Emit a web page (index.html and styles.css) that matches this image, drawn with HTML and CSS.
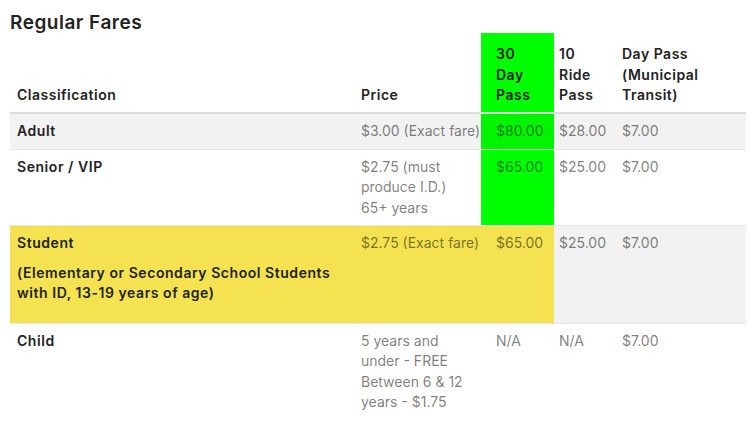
FILE: index.html
```html
<!DOCTYPE html>
<html lang="en">
<head>
<meta charset="utf-8">
<title>Regular Fares</title>
<link rel="stylesheet" href="styles.css">
</head>
<body>
<main class="page">
  <h2 class="title">Regular Fares</h2>
  <table class="fares">
    <colgroup>
      <col class="c-class">
      <col class="c-price">
      <col class="c-30">
      <col class="c-10">
      <col class="c-day">
    </colgroup>
    <thead>
      <tr>
        <th class="col1">Classification</th>
        <th class="col2">Price</th>
        <th class="col3 green">30<br>Day<br>Pass</th>
        <th class="col4">10<br>Ride<br>Pass</th>
        <th class="col5">Day Pass<br>(Municipal<br>Transit)</th>
      </tr>
    </thead>
    <tbody>
      <tr class="striped">
        <td class="col1 label">Adult</td>
        <td class="col2">$3.00 (Exact fare)</td>
        <td class="col3 green">$80.00</td>
        <td class="col4">$28.00</td>
        <td class="col5">$7.00</td>
      </tr>
      <tr>
        <td class="col1 label">Senior / VIP</td>
        <td class="col2">$2.75 (must<br>produce I.D.)<br>65+ years</td>
        <td class="col3 green">$65.00</td>
        <td class="col4">$25.00</td>
        <td class="col5">$7.00</td>
      </tr>
      <tr class="striped">
        <td class="col1 label yellow">Student
          <p class="note">(Elementary or Secondary School Students<br>with ID, 13-19 years of age)</p>
        </td>
        <td class="col2 yellow">$2.75 (Exact fare)</td>
        <td class="col3 yellow">$65.00</td>
        <td class="col4">$25.00</td>
        <td class="col5">$7.00</td>
      </tr>
      <tr>
        <td class="col1 label">Child</td>
        <td class="col2">5 years and<br>under - FREE<br>Between 6 &amp; 12<br>years - $1.75</td>
        <td class="col3">N/A</td>
        <td class="col4">N/A</td>
        <td class="col5">$7.00</td>
      </tr>
    </tbody>
  </table>
</main>
</body>
</html>
```
FILE: styles.css
```css
html, body {
  margin: 0;
  padding: 0;
  background: #ffffff;
}

body {
  font-family: Inter, "Open Sans", sans-serif;
  font-size: 14px;
  color: #222222;
}

.page {
  padding: 0 10px;
}

.title {
  margin: 12px 0 0;
  font-size: 19px;
  line-height: 21px;
  font-weight: 600;
  letter-spacing: 0.5px;
  color: #222222;
}

.fares {
  width: 736px;
  table-layout: fixed;
  border-collapse: collapse;
  line-height: 20.5px;
}

.c-class { width: 344px; }
.c-price { width: 127px; }
.c-30 { width: 73px; }
.c-10 { width: 61px; }
.c-day { width: 131px; }

.fares th {
  text-align: left;
  vertical-align: bottom;
  font-weight: 600;
  letter-spacing: 0.5px;
  color: #222222;
  padding: 11px 7px 6.5px;
  white-space: nowrap;
}

.fares thead tr {
  border-bottom: 2px solid #dddddd;
}

.fares td {
  vertical-align: top;
  padding: 7px;
  color: rgba(0, 0, 0, 0.52);
  white-space: nowrap;
}

.fares tbody tr {
  border-top: 1px solid #e6e6e6;
}

.fares tbody tr:first-child {
  border-top: none;
}

.fares .col3 { padding-left: 15px; padding-right: 3px; }
.fares .col4 { padding-left: 5px; padding-right: 3px; }

.striped {
  background: #f2f2f2;
}

.fares td.label {
  font-weight: 600;
  letter-spacing: 0.55px;
  color: #222222;
}

.note {
  margin: 9px 0 12px;
  font-weight: 600;
}

.green {
  background: #00ff00;
}

.striped .green {
  background: #00f400;
}

.yellow {
  background: #f4e250;
}
```
